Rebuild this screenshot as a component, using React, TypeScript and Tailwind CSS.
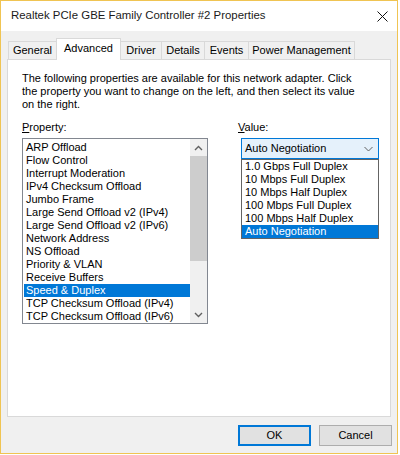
import React from 'react';

const properties = [
  'ARP Offload',
  'Flow Control',
  'Interrupt Moderation',
  'IPv4 Checksum Offload',
  'Jumbo Frame',
  'Large Send Offload v2 (IPv4)',
  'Large Send Offload v2 (IPv6)',
  'Network Address',
  'NS Offload',
  'Priority & VLAN',
  'Receive Buffers',
  'Speed & Duplex',
  'TCP Checksum Offload (IPv4)',
  'TCP Checksum Offload (IPv6)',
];

const values = [
  '1.0 Gbps Full Duplex',
  '10 Mbps Full Duplex',
  '10 Mbps Half Duplex',
  '100 Mbps Full Duplex',
  '100 Mbps Half Duplex',
  'Auto Negotiation',
];

const tabs = [
  { label: 'General', cls: 'w-[49px]' },
  { label: 'Advanced', cls: 'w-[65px] -ml-px', active: true },
  { label: 'Driver', cls: 'w-[42px] -ml-px' },
  { label: 'Details', cls: 'w-[44px] -ml-px' },
  { label: 'Events', cls: 'w-[45px] -ml-px' },
  { label: 'Power Management', cls: 'w-[107px] -ml-px' },
];

const Chevron = ({ up = false }: { up?: boolean }) => (
  <svg width="9" height="6" viewBox="0 0 9 6" fill="none">
    <path
      d={up ? 'M1 5L4.5 1.5L8 5' : 'M1 1L4.5 4.5L8 1'}
      stroke="#606060"
      strokeWidth="1.4"
    />
  </svg>
);

export default function App() {
  return (
    <div className="w-[398px] h-[454px] border border-[#f0c452] bg-[#f0f0f0] flex flex-col font-['Liberation_Sans',Arial,sans-serif] text-black">
      {/* title bar */}
      <div className="h-[30px] bg-white flex items-center justify-between pl-[10px] pr-[8px]">
        <span className="text-[11.4px] leading-none text-[#1a1a1a]">Realtek PCIe GBE Family Controller #2 Properties</span>
        <svg width="11" height="11" viewBox="0 0 11 11" className="mr-[1px]">
          <path d="M0.5 0.5L10.5 10.5M10.5 0.5L0.5 10.5" stroke="#111" strokeWidth="1" />
        </svg>
      </div>

      <div className="flex-1 flex flex-col pl-[6px] pr-[5px] pt-[7px]">
        {/* tabs */}
        <div className="flex items-end pl-[1px] h-[21px]">
          {tabs.map((t) =>
            t.active ? (
              <div
                key={t.label}
                className={`${t.cls} h-[22px] -mb-px relative z-10 bg-white border-l border-t border-r border-[#d9d9d9] flex items-center justify-center text-[11px] pb-[3px]`}
              >
                {t.label}
              </div>
            ) : (
              <div
                key={t.label}
                className={`${t.cls} h-[18px] bg-[#f0f0f0] border-l border-t border-r border-[#d9d9d9] flex items-center justify-center text-[11px]`}
              >
                {t.label}
              </div>
            )
          )}
        </div>

        {/* panel */}
        <div className="w-[384px] h-[358px] bg-white border border-[#d9d9d9] pt-[12px] pl-[14px] text-[11px] leading-[13px]">
          <p>
            The following properties are available for this network adapter. Click
            <br />
            the property you want to change on the left, and then select its value
            <br />
            on the right.
          </p>

          <div className="flex mt-[10px]">
            <div className="w-[186px]">
              <div className="h-[13px] mb-[4px]">
                <span className="underline">P</span>roperty:
              </div>
              <div className="h-[186px] border border-[#828790] flex">
                <div className="w-[166px] ml-[1px] pt-[2px]">
                  {properties.map((p) =>
                    p === 'Speed & Duplex' ? (
                      <div key={p} className="h-[13px] px-[2px] bg-[#0078d7] text-white whitespace-nowrap">
                        {p}
                      </div>
                    ) : (
                      <div key={p} className="h-[13px] px-[2px] whitespace-nowrap">
                        {p}
                      </div>
                    )
                  )}
                </div>
                <div className="w-[17px] bg-[#f0f0f0] flex flex-col">
                  <div className="h-[17px] flex items-center justify-center">
                    <Chevron up />
                  </div>
                  <div className="h-[105px] bg-[#cdcdcd]" />
                  <div className="flex-1" />
                  <div className="h-[17px] flex items-center justify-center">
                    <Chevron />
                  </div>
                </div>
              </div>
            </div>

            <div className="ml-[30px] w-[141px]">
              <div className="h-[13px] mb-[4px]">
                <span className="underline">V</span>alue:
              </div>
              <div className="ml-[3px] w-[138px] h-[21px] border border-[#0078d7] bg-[#e5f1fb] flex items-center justify-between pl-[3px] pr-[5px]">
                <span>Auto Negotiation</span>
                <svg width="9" height="6" viewBox="0 0 9 6" fill="none">
                  <path d="M0.5 1L4.5 5L8.5 1" stroke="#606060" strokeWidth="1" />
                </svg>
              </div>
              <div className="ml-[3px] w-[138px] border border-[#646464] bg-white">
                {values.map((v) =>
                  v === 'Auto Negotiation' ? (
                    <div key={v} className="h-[13px] px-[3px] bg-[#0078d7] text-white">
                      {v}
                    </div>
                  ) : (
                    <div key={v} className="h-[13px] px-[3px]">
                      {v}
                    </div>
                  )
                )}
              </div>
            </div>
          </div>
        </div>

        {/* buttons */}
        <div className="flex justify-end gap-[8px] mt-[8px] text-[11px]">
          <button className="w-[73px] h-[21px] border-2 border-[#0078d7] bg-[#e1e1e1] flex items-center justify-center">
            OK
          </button>
          <button className="w-[73px] h-[21px] border border-[#adadad] bg-[#e1e1e1] flex items-center justify-center">
            Cancel
          </button>
        </div>
      </div>
    </div>
  );
}
